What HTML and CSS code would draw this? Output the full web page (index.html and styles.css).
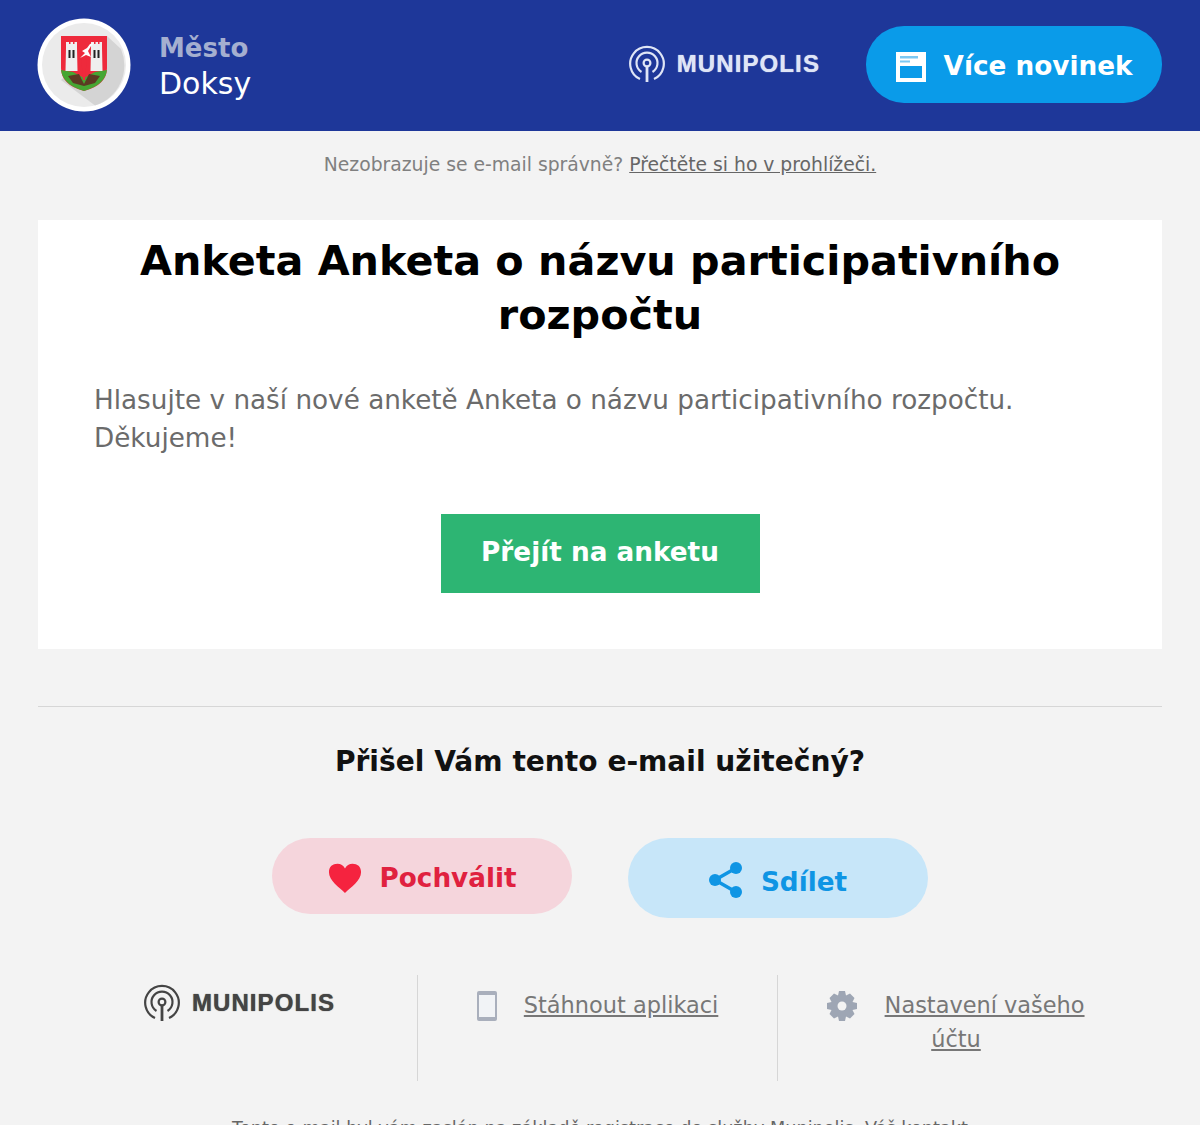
FILE: index.html
```html
<!DOCTYPE html>
<html lang="cs">
<head>
<meta charset="utf-8">
<title>Anketa</title>
<link rel="stylesheet" href="styles.css">
</head>
<body>
<header class="header">
  <div class="brand">
    <div class="crest">
      <svg viewBox="0 0 94 94" width="94" height="94">
        <circle cx="47" cy="47" r="46.500" fill="#fff"/>
        <circle cx="47" cy="47" r="42" fill="#ebebeb"/>
        <path d="M70 18L84 31A42 42 0 0 1 58 87.500L24 62Z" fill="#d4d4d4"/>
        <path d="M24 18H70V50Q70 67 47 73Q24 67 24 50Z" fill="#ee2a3c"/>
        <path d="M24 52L36 54L47 60L58 54L70 52Q68 67 47 73Q26 67 24 52Z" fill="#46a632"/>
        <path d="M31 58L42 56L47 66L52 56L63 58L58 65L47 68L36 65Z" fill="#5c3a22"/>
        <path d="M29 30V24H32V26H33.500V24H36V26H37.500V24H40V30L40.500 53H28.500Z" fill="#efefef"/>
        <path d="M54 30V24H57V26H58.500V24H61V26H62.500V24H65V30L65.500 53H53.500Z" fill="#efefef"/>
        <path d="M31.500 32H33.500V40H31.500ZM35.500 32H37.500V40H35.500ZM56.500 32H58.500V40H56.500ZM60.500 32H62.500V40H60.500Z" fill="#222"/>
        <path d="M44 38L47 30L50 38L48 62H46Z" fill="#ee2a3c"/>
        <path d="M43 40L49 37L54 39L51 33L54 28L57 25L53 26L50 30L45 33L48 35Z" fill="#fff"/>
      </svg>
    </div>
    <div class="city">
      <div class="city-label">Město</div>
      <div class="city-name">Doksy</div>
    </div>
  </div>
  <div class="header-right">
    <div class="logo logo-light">
      <svg class="logo-mark" viewBox="0 0 36 38" width="36" height="38" fill="none" stroke="currentColor">
        <circle cx="18" cy="18" r="3.400" stroke-width="2.200"/>
        <path d="M18 21V37" stroke-width="2.800"/>
        <path d="M12.500 27A10.500 10.500 0 1 1 23.500 27" stroke-width="2.200"/>
        <path d="M11 34A16.800 16.800 0 1 1 25 34" stroke-width="2.200"/>
      </svg>
      <span class="logo-text">MUNIPOLIS</span>
    </div>
    <a class="more" href="#">
      <svg class="more-icon" viewBox="0 0 30 30" width="30" height="30">
        <path d="M0 0H30V30H0Z" fill="#fff"/>
        <path d="M4 4H22V6.500H4ZM4 8.500H14V10.500H4Z" fill="#7cc8f2"/>
        <path d="M4 14H26V26H4Z" fill="#0a9be9"/>
      </svg>
      <span>Více novinek</span>
    </a>
  </div>
</header>

<p class="notice">Nezobrazuje se e-mail správně? <a href="#">Přečtěte si ho v prohlížeči.</a></p>

<main class="card">
  <h1 class="title">Anketa Anketa o názvu participativního rozpočtu</h1>
  <p class="lead">Hlasujte v naší nové anketě Anketa o názvu participativního rozpočtu. Děkujeme!</p>
  <div class="cta-row"><a class="cta" href="#">Přejít na anketu</a></div>
</main>

<section class="feedback">
  <h2 class="question">Přišel Vám tento e-mail užitečný?</h2>
  <div class="actions">
    <a class="pill pill-praise" href="#">
      <svg viewBox="0 0 36 32" width="34" height="32"><path d="M18 32C12 26 1 19 1 10C1 4 5 1 10 1C13.500 1 16.500 3 18 6C19.500 3 22.500 1 26 1C31 1 35 4 35 10C35 19 24 26 18 32Z" fill="#f5233f"/></svg>
      <span>Pochválit</span>
    </a>
    <a class="pill pill-share" href="#">
      <svg viewBox="0 0 34 36" width="34" height="36" fill="#0f95e4"><circle cx="6" cy="18" r="6"/><circle cx="27" cy="6" r="6"/><circle cx="27" cy="30" r="6"/><path d="M6 18L27 6M6 18L27 30" stroke="#0f95e4" stroke-width="3.500"/></svg>
      <span class="pill-share-label">Sdílet</span>
    </a>
  </div>
</section>

<section class="links">
  <div class="link-cell">
    <div class="logo logo-dark">
      <svg class="logo-mark" viewBox="0 0 36 38" width="36" height="38" fill="none" stroke="currentColor">
        <circle cx="18" cy="18" r="3.400" stroke-width="2.200"/>
        <path d="M18 21V37" stroke-width="2.800"/>
        <path d="M12.500 27A10.500 10.500 0 1 1 23.500 27" stroke-width="2.200"/>
        <path d="M11 34A16.800 16.800 0 1 1 25 34" stroke-width="2.200"/>
      </svg>
      <span class="logo-text">MUNIPOLIS</span>
    </div>
  </div>
  <div class="link-cell">
    <svg class="link-icon" viewBox="0 0 20 30" width="20" height="30"><rect x="1" y="1" width="18" height="28" rx="1" fill="#f1f3f6" stroke="#a9afbc" stroke-width="2"/><path d="M1 3H19M1 27H19" stroke="#a9afbc" stroke-width="2"/></svg>
    <a href="#">Stáhnout aplikaci</a>
  </div>
  <div class="link-cell link-cell-last">
    <svg class="link-icon" viewBox="0 0 30 30" width="30" height="30"><path d="M12 0H18L19 4.500L23 2.500L27.500 7L25.500 11L30 12V18L25.500 19L27.500 23L23 27.500L19 25.500L18 30H12L11 25.500L7 27.500L2.500 23L4.500 19L0 18V12L4.500 11L2.500 7L7 2.500L11 4.500Z" fill="#9ea6b4"/><circle cx="15" cy="15" r="4.500" fill="#f3f3f3"/></svg>
    <a href="#">Nastavení vašeho účtu</a>
  </div>
</section>

<p class="legal">Tento e-mail byl vám zaslán na základě registrace do služby Munipolis. Váš kontakt</p>
</body>
</html>
```

FILE: styles.css
```css
* { box-sizing: border-box; }
html, body { margin: 0; padding: 0; }
body {
  width: 1200px;
  height: 1125px;
  overflow: hidden;
  background: #f3f3f3;
  font-family: "DejaVu Sans", sans-serif;
  color: #6f6f6f;
}
a { color: inherit; }

.header {
  height: 131px;
  background: #1e3799;
  display: flex;
  align-items: center;
  justify-content: space-between;
  padding: 0 38px 0 37px;
}
.brand { display: flex; align-items: center; gap: 28px; padding-bottom: 2px; }
.crest { width: 94px; height: 94px; }
.crest svg { display: block; }
.city { margin-top: 2px; line-height: 36px; }
.city-label { font-size: 26px; font-weight: 700; color: #a5afd0; }
.city-name { font-size: 30px; line-height: 35px; color: #fff; }
.header-right { display: flex; align-items: center; gap: 46px; padding-bottom: 2px; }

.logo { display: flex; align-items: center; gap: 12px; }
.logo-light { color: #dfe5f6; padding-bottom: 2px; }
.logo-dark { color: #444; justify-content: center; }
.logo-mark { display: block; flex: none; }
.logo-text {
  font-family: "Liberation Sans", sans-serif;
  font-weight: 700;
  font-size: 24px;
  letter-spacing: 1.100px;
  text-shadow: 0 0 1px currentColor;
}
.more {
  width: 296px;
  height: 77px;
  border-radius: 38px;
  background: #0a9be9;
  color: #fff;
  display: flex;
  align-items: center;
  justify-content: center;
  gap: 18px;
  padding-top: 3px;
  font-size: 26.300px;
  font-weight: 700;
  text-decoration: none;
}
.more-icon { margin-top: 2px; }

.notice {
  margin: 0;
  height: 89px;
  padding-top: 22px;
  text-align: center;
  font-size: 18.750px;
  line-height: 24px;
  color: #808080;
}
.notice a { color: #666; }

.card {
  margin: 0 38px;
  height: 429px;
  background: #fff;
  padding: 14px 56px 0;
}
.title {
  margin: 0;
  text-align: center;
  font-size: 41.300px;
  line-height: 54px;
  color: #000;
}
.lead {
  margin: 39px 0 0;
  font-size: 26.250px;
  line-height: 38px;
  color: #6b6b6b;
}
.cta-row { display: flex; justify-content: center; margin-top: 57px; }
.cta {
  width: 319px;
  height: 79px;
  padding-bottom: 4px;
  background: #2db573;
  color: #fff;
  display: flex;
  align-items: center;
  justify-content: center;
  font-size: 26.300px;
  font-weight: 700;
  text-decoration: none;
}

.feedback {
  margin: 57px 38px 0;
  border-top: 1px solid #d6d6d6;
}
.question {
  margin: 36px 0 0;
  text-align: center;
  font-size: 28.100px;
  line-height: 38px;
  color: #111;
}
.actions {
  display: flex;
  justify-content: center;
  align-items: flex-start;
  gap: 56px;
  margin-top: 57px;
}
.pill {
  width: 300px;
  border-radius: 40px;
  display: flex;
  align-items: center;
  justify-content: center;
  gap: 18px;
  padding-top: 4px;
  font-size: 26.250px;
  font-weight: 700;
  text-decoration: none;
}
.pill-praise { height: 76px; background: #f5d5dc; color: #e0213f; }
.pill-share { height: 80px; background: #c7e6f9; color: #0f95e4; }
.pill-share-label { margin-top: 4px; }

.links {
  margin: 57px 62px 0;
  display: grid;
  grid-template-columns: 355px 360px 361px;
  font-size: 22.450px;
  line-height: 34px;
  color: #777;
}
.link-cell {
  height: 106px;
  text-align: center;
  padding: 13px 30px 0;
  border-left: 1px solid #d6d6d6;
}
.link-cell:first-child { border-left: 0; padding: 9px 0 0; }
.link-cell-last { padding-right: 34px; }
.link-icon { vertical-align: -7.500px; margin-right: 20px; }

.legal {
  margin: 35px 0 0;
  text-align: center;
  font-size: 17.700px;
  line-height: 24px;
  color: #666;
}
```
